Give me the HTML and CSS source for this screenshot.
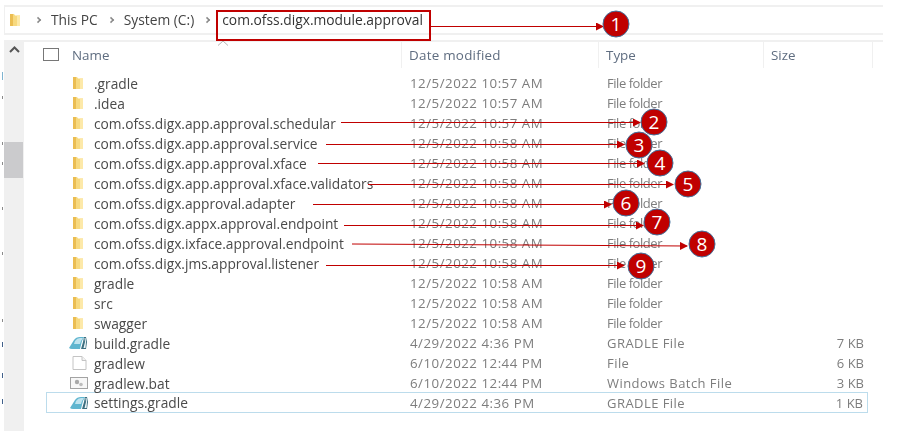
FILE: index.html
```html
<!DOCTYPE html>
<html lang="en">
<head>
<meta charset="utf-8">
<title>com.ofss.digx.module.approval</title>
<link rel="stylesheet" href="styles.css">
</head>
<body>
<svg width="0" height="0" class="defs">
  <defs>
    <symbol id="folder" viewBox="0 0 12 14">
      <path d="M1 1h4l1 1.500h5V13H1z" fill="#f7d97f"/>
      <path d="M1 1h3v12H1z" fill="#ebbd52"/>
      <path d="M8 2.500h3V13H8z" fill="#fde9a9"/>
    </symbol>
    <symbol id="gradlefile" viewBox="0 0 20 14">
      <path d="M0 12 5 4Q7 1 11 1h4l-2 4-2 8H3Q1 13 0 12z" fill="#5fb5cf"/>
      <path d="M6 5Q8 2 11 2h3l-2 3-1 3H5z" fill="#bfe3ee"/>
      <path d="M15 1h2l1 5-1 7h-5l2-7z" fill="#3d6f80"/>
      <path d="M15.500 2h1l.5 4-.5 6h-2l1.500-6z" fill="#eef6f8"/>
    </symbol>
    <symbol id="plainfile" viewBox="0 0 15 14">
      <path d="M1 .500h9l4 4v9H1z" fill="#fff" stroke="#c4c4c4"/>
      <path d="M10 .500v4h4" fill="#f3f3f3" stroke="#c4c4c4"/>
    </symbol>
    <symbol id="batfile" viewBox="0 0 18 12">
      <rect x=".5" y=".5" width="17" height="11" fill="#f7f7f7" stroke="#a3a3a3"/>
      <circle cx="7" cy="5" r="2.200" fill="#a8a8a8"/>
      <circle cx="11" cy="7.500" r="1.800" fill="#bdbdbd"/>
    </symbol>
  </defs>
</svg>

<div class="window">
  <div class="specks">
    <i class="speck s1"></i><i class="speck s2"></i><i class="speck s3"></i><i class="speck s4"></i><i class="speck s5"></i><i class="speck s6"></i><i class="speck s7"></i><i class="speck s8"></i><i class="speck s9"></i><i class="speck s10"></i>
  </div>
  <div class="main">
    <nav class="address">
      <svg class="addr-folder"><use href="#folder"/></svg>
      <span class="sep"></span><span class="crumb">This PC</span>
      <span class="sep"></span><span class="crumb">System (C:)</span>
      <span class="sep"></span><span class="crumb current">com.ofss.digx.module.approval</span>
    </nav>
    <div class="pane">
      <aside class="scrollbar">
        <svg class="scroll-up" width="11" height="7" viewBox="0 0 11 7"><path d="M1 6 5.500 1.500 10 6" fill="none" stroke="#555" stroke-width="2"/></svg>
        <div class="thumb"></div>
      </aside>
      <div class="list">
        <div class="head">
          <span class="check"></span>
          <span class="hcell hname">Name</span>
          <span class="hcell hdate">Date modified</span>
          <span class="hcell">Type</span>
          <span class="hcell">Size</span>
          <svg class="sort" width="12" height="6" viewBox="0 0 12 6"><path d="M1 5.500 6 1l5 4.500" fill="none" stroke="#b5b5b5"/></svg>
        </div>
        <div class="rows">
          <div class="row"><span class="cell-ico"><svg class="ico"><use href="#folder"/></svg></span><span class="name">.gradle</span><span class="date">12/5/2022 10:57 AM</span><span class="type">File folder</span><span class="size"></span></div>
          <div class="row"><span class="cell-ico"><svg class="ico"><use href="#folder"/></svg></span><span class="name">.idea</span><span class="date">12/5/2022 10:57 AM</span><span class="type">File folder</span><span class="size"></span></div>
          <div class="row"><span class="cell-ico"><svg class="ico"><use href="#folder"/></svg></span><span class="name">com.ofss.digx.app.approval.schedular</span><span class="date">12/5/2022 10:57 AM</span><span class="type">File folder</span><span class="size"></span></div>
          <div class="row"><span class="cell-ico"><svg class="ico"><use href="#folder"/></svg></span><span class="name">com.ofss.digx.app.approval.service</span><span class="date">12/5/2022 10:58 AM</span><span class="type">File folder</span><span class="size"></span></div>
          <div class="row"><span class="cell-ico"><svg class="ico"><use href="#folder"/></svg></span><span class="name">com.ofss.digx.app.approval.xface</span><span class="date">12/5/2022 10:58 AM</span><span class="type">File folder</span><span class="size"></span></div>
          <div class="row"><span class="cell-ico"><svg class="ico"><use href="#folder"/></svg></span><span class="name">com.ofss.digx.app.approval.xface.validators</span><span class="date">12/5/2022 10:58 AM</span><span class="type">File folder</span><span class="size"></span></div>
          <div class="row"><span class="cell-ico"><svg class="ico"><use href="#folder"/></svg></span><span class="name">com.ofss.digx.approval.adapter</span><span class="date">12/5/2022 10:58 AM</span><span class="type">File folder</span><span class="size"></span></div>
          <div class="row"><span class="cell-ico"><svg class="ico"><use href="#folder"/></svg></span><span class="name">com.ofss.digx.appx.approval.endpoint</span><span class="date">12/5/2022 10:58 AM</span><span class="type">File folder</span><span class="size"></span></div>
          <div class="row"><span class="cell-ico"><svg class="ico"><use href="#folder"/></svg></span><span class="name">com.ofss.digx.ixface.approval.endpoint</span><span class="date">12/5/2022 10:58 AM</span><span class="type">File folder</span><span class="size"></span></div>
          <div class="row"><span class="cell-ico"><svg class="ico"><use href="#folder"/></svg></span><span class="name">com.ofss.digx.jms.approval.listener</span><span class="date">12/5/2022 10:58 AM</span><span class="type">File folder</span><span class="size"></span></div>
          <div class="row"><span class="cell-ico"><svg class="ico"><use href="#folder"/></svg></span><span class="name">gradle</span><span class="date">12/5/2022 10:58 AM</span><span class="type">File folder</span><span class="size"></span></div>
          <div class="row"><span class="cell-ico"><svg class="ico"><use href="#folder"/></svg></span><span class="name">src</span><span class="date">12/5/2022 10:58 AM</span><span class="type">File folder</span><span class="size"></span></div>
          <div class="row"><span class="cell-ico"><svg class="ico"><use href="#folder"/></svg></span><span class="name">swagger</span><span class="date">12/5/2022 10:58 AM</span><span class="type">File folder</span><span class="size"></span></div>
          <div class="row file"><span class="cell-ico"><svg class="ico gradle"><use href="#gradlefile"/></svg></span><span class="name">build.gradle</span><span class="date">4/29/2022 4:36 PM</span><span class="type">GRADLE File</span><span class="size">7 KB</span></div>
          <div class="row file"><span class="cell-ico"><svg class="ico plain"><use href="#plainfile"/></svg></span><span class="name">gradlew</span><span class="date">6/10/2022 12:44 PM</span><span class="type">File</span><span class="size">6 KB</span></div>
          <div class="row file"><span class="cell-ico"><svg class="ico bat"><use href="#batfile"/></svg></span><span class="name">gradlew.bat</span><span class="date">6/10/2022 12:44 PM</span><span class="type">Windows Batch File</span><span class="size">3 KB</span></div>
          <div class="row file selected"><span class="cell-ico"><svg class="ico gradle"><use href="#gradlefile"/></svg></span><span class="name">settings.gradle</span><span class="date">4/29/2022 4:36 PM</span><span class="type">GRADLE File</span><span class="size">1 KB</span></div>
        </div>
      </div>
    </div>
  </div>
</div>

<div class="callout-box"></div>
<svg class="callouts" width="897" height="431" viewBox="0 0 897 431">
  <defs>
    <marker id="tip" markerUnits="userSpaceOnUse" markerWidth="8" markerHeight="8" refX="7" refY="4" orient="auto"><path d="M0 0 8 4 0 8z" fill="#c00000"/></marker>
  </defs>
  <g class="lead">
    <path d="M431 26.500H603" marker-end="url(#tip)"/>
    <path d="M341 122.500H640" marker-end="url(#tip)"/>
    <path d="M326 144.500H624" marker-end="url(#tip)"/>
    <path d="M318 163.500H644" marker-end="url(#tip)"/>
    <path d="M368 184.500H673" marker-end="url(#tip)"/>
    <path d="M313 204.500H611" marker-end="url(#tip)"/>
    <path d="M344 225.500H643" marker-end="url(#tip)"/>
    <path d="M352 244 687 246" marker-end="url(#tip)"/>
    <path d="M326 265.500H624" marker-end="url(#tip)"/>
  </g>
  <g class="badge"><circle cx="616" cy="24" r="13"/><text x="616" y="31">1</text></g>
  <g class="badge"><circle cx="654" cy="122" r="13"/><text x="654" y="129">2</text></g>
  <g class="badge"><circle cx="639" cy="145" r="13"/><text x="639" y="152">3</text></g>
  <g class="badge"><circle cx="660" cy="163" r="13"/><text x="660" y="170">4</text></g>
  <g class="badge"><circle cx="688" cy="184" r="13"/><text x="688" y="191">5</text></g>
  <g class="badge"><circle cx="626" cy="203" r="13"/><text x="626" y="210">6</text></g>
  <g class="badge"><circle cx="657" cy="222" r="13"/><text x="657" y="229">7</text></g>
  <g class="badge"><circle cx="702" cy="244" r="13"/><text x="702" y="251">8</text></g>
  <g class="badge"><circle cx="641" cy="266" r="13"/><text x="641" y="273">9</text></g>
</svg>
</body>
</html>
```
FILE: styles.css
```css
* { box-sizing: border-box; }
html, body { margin: 0; padding: 0; }
body {
  width: 897px;
  height: 431px;
  overflow: hidden;
  background: #fff;
  position: relative;
  font-family: "Open Sans", "Noto Sans", sans-serif;
  font-size: 13px;
  color: #444;
}
.defs { position: absolute; }
.window { display: flex; height: 431px; padding-top: 5px; filter: blur(0.4px); }
.specks { width: 4px; position: relative; flex: none; }
.speck { position: absolute; left: 2px; width: 1px; height: 3px; background: #8a8a8a; }
.s1 { top: 67px; height: 8px; background: #7fb4d0; }
.s2 { top: 91px; }
.s3 { top: 137px; }
.s4 { top: 157px; }
.s5 { top: 202px; }
.s6 { top: 247px; }
.s7 { top: 314px; }
.s8 { top: 337px; height: 5px; background: #40608a; }
.s9 { top: 368px; height: 5px; background: #40608a; }
.s10 { top: 394px; height: 5px; background: #40608a; }
.main { width: 879px; flex: none; display: flex; flex-direction: column; }
.address {
  height: 30px;
  display: flex;
  align-items: center;
  border-top: 2px solid #f0f0f0;
  border-bottom: 2px solid #f0f0f0;
  border-left: 1px solid #f0f0f0;
  padding-left: 4px;
  padding-bottom: 2px;
  font-size: 13.8px;
  color: #444;
}
.addr-folder { width: 12px; height: 14px; flex: none; margin: 2px 14px 0 0; }
.sep {
  width: 6px;
  height: 6px;
  flex: none;
  border-top: 2px solid #888;
  border-right: 2px solid #888;
  transform: rotate(45deg) scale(.75);
  margin: 2px 10px 0 0;
}
.crumb { margin-right: 10px; white-space: nowrap; }
.crumb.current { color: #333; margin-left: 2px; }
.pane { margin-top: 5px; flex: 1; display: flex; border-top: 2px solid #f0f0f0; }
.scrollbar {
  width: 20px;
  flex: none;
  background: #f0f0f0;
  position: relative;
  display: flex;
  flex-direction: column;
  align-items: center;
}
.scroll-up { margin-top: 4px; flex: none; }
.thumb { position: absolute; top: 100px; left: 0; width: 19px; height: 36px; background: #cbcbcd; }
.list { flex: 1; display: flex; flex-direction: column; padding-left: 22px; }
.head {
  height: 26px;
  display: grid;
  grid-template-columns: 26px 330px 197px 165px 109px;
  align-items: center;
  position: relative;
  font-size: 13.4px;
}
.check { width: 16px; height: 13px; border: 1px solid #777; display: block; background: #fff; margin: 0 0 2px -3px; }
.hcell { height: 26px; line-height: 26px; padding-left: 7px; border-right: 1px solid #f0f0f0; color: #5f6d80; }
.hname { padding-left: 0; }
.hdate { letter-spacing: .25px; }
.sort { position: absolute; left: 171px; top: -2px; }
.rows { margin-top: 5px; width: 822px; }
.row {
  height: 20px;
  display: grid;
  grid-template-columns: 48px 316px 197px 1fr 60px;
  align-items: center;
  white-space: nowrap;
  color: #7d7d7d;
}
.cell-ico { display: flex; padding-left: 26px; }
.ico { width: 12px; height: 14px; flex: none; }
.ico.gradle { width: 20px; margin-left: -3px; }
.ico.plain { width: 15px; }
.ico.bat { width: 18px; height: 12px; margin-left: -2px; }
.name { color: #4a4a4a; font-size: 13.75px; }
.date { letter-spacing: .5px; font-size: 13.3px; }
.type { letter-spacing: -.45px; }
.file .type { letter-spacing: .45px; }
.size { text-align: right; padding-right: 4px; }
.selected { border: 1px solid #bcdcec; height: 21px; margin-top: -1px; grid-template-columns: 47px 316px 197px 1fr 59px; }
.callout-box {
  position: absolute;
  left: 216px;
  top: 10px;
  width: 215px;
  height: 31px;
  border: 2px solid #c00000;
}
.callouts { position: absolute; left: 0; top: 0; }
.lead path { fill: none; stroke: #c00000; stroke-width: 1; }
.badge circle { fill: #c00000; stroke: #41719c; stroke-width: 1; }
.badge text { fill: #fff; font-family: "Open Sans", sans-serif; font-size: 19px; text-anchor: middle; }
```
